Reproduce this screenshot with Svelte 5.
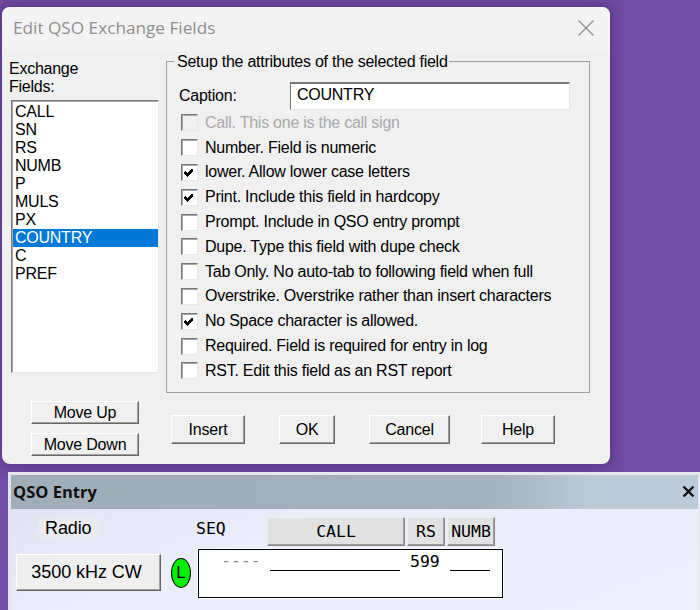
<script>
  const fields = ['CALL','SN','RS','NUMB','P','MULS','PX','COUNTRY','C','PREF'];
  const opts = [
    ['Call. This one is the call sign', false, true],
    ['Number. Field is numeric', false],
    ['lower. Allow lower case letters', true],
    ['Print. Include this field in hardcopy', true],
    ['Prompt. Include in QSO entry prompt', false],
    ['Dupe. Type this field with dupe check', false],
    ['Tab Only. No auto-tab to following field when full', false],
    ['Overstrike. Overstrike rather than insert characters', false],
    ['No Space character is allowed.', true],
    ['Required. Field is required for entry in log', false],
    ['RST. Edit this field as an RST report', false]
  ];
</script>

<div class="desktop">
  <section class="dialog">
    <header class="dtitle">
      <span>Edit QSO Exchange Fields</span>
      <svg class="dclose" width="16" height="16" viewBox="0 0 16 16"><path d="M.5.5l15 15M15.5.5l-15 15" stroke="#8c8c8c" stroke-width="1.2" fill="none"/></svg>
    </header>
    <div class="dbody">
      <div class="main">
        <div class="left">
          <div class="exlabel">Exchange<br/>Fields:</div>
          <ul class="list">
            {#each fields as f}
              <li class:sel={f === 'COUNTRY'}>{f}</li>
            {/each}
          </ul>
        </div>
        <div class="group">
          <div class="legend">Setup the attributes of the selected field</div>
          <div class="caprow">
            <span class="caplabel">Caption:</span>
            <div class="input">COUNTRY</div>
          </div>
          <div class="opts">
            {#each opts as [label, checked, disabled]}
              <div class="opt" class:disabled>
                <span class="box">
                  {#if checked}
                    <svg width="13" height="13" viewBox="0 0 13 13" shape-rendering="crispEdges"><path d="M2 5h1v1h1v1h1v-1h1v-1h1v-1h1v-1h2v3h-1v1h-1v1h-1v1h-1v1h-1v1h-1v-1h-1v-1h-1v-1h-1z" fill="#000"/></svg>
                  {/if}
                </span>
                <span>{label}</span>
              </div>
            {/each}
          </div>
        </div>
      </div>
      <div class="buttons">
        <div class="moves">
          <button class="win mv">Move Up</button>
          <button class="win mv">Move Down</button>
        </div>
        <div class="actions">
          <button class="win ins">Insert</button>
          <button class="win ok">OK</button>
          <button class="win can">Cancel</button>
          <button class="win hlp">Help</button>
        </div>
      </div>
    </div>
  </section>

  <section class="qso">
    <header class="qtitle">
      <span>QSO Entry</span>
      <svg width="13" height="13" viewBox="0 0 13 13"><path d="M1.5 1.5l10 10M11.5 1.5l-10 10" stroke="#111" stroke-width="2.4" fill="none"/></svg>
    </header>
    <div class="qbody">
      <div class="radio">
        <div class="radiolabel">Radio</div>
        <button class="win freq">3500 kHz CW</button>
      </div>
      <div class="led">L</div>
      <div class="entry">
        <div class="heads">
          <span class="seq">SEQ</span>
          <button class="win mono call">CALL</button>
          <button class="win mono rs">RS</button>
          <button class="win mono numb">NUMB</button>
        </div>
        <div class="fields">
          <span class="dash">----</span>
          <span class="line l1"></span>
          <span class="val">599</span>
          <span class="line l2"></span>
        </div>
      </div>
    </div>
  </section>
</div>

<style>
  :global(body) { margin: 0; }
  .desktop {
    position: relative;
    width: 700px;
    height: 610px;
    overflow: hidden;
    background: #744ea5;
    font-family: "Liberation Sans", Arial, sans-serif;
    font-size: 16px;
    letter-spacing: -0.25px;
    color: #000;
  }
  .dialog {
    position: absolute;
    left: 2px;
    top: 7px;
    width: 608px;
    height: 457px;
    border-radius: 8px;
    overflow: hidden;
    background: #f0f0f0;
    box-shadow: 0 0 12px 5px rgba(70, 40, 120, 0.55);
  }
  .dtitle {
    height: 43px;
    box-sizing: border-box;
    background: #f3f3f3;
    display: flex;
    align-items: center;
    justify-content: space-between;
    padding: 0 16px 2px 11px;
    font-family: "Open Sans", sans-serif;
    font-size: 17.2px;
    letter-spacing: 0;
    color: #8f8f8f;
  }
  .dbody { padding: 0 0 0 7px; }
  .main { display: flex; height: 343px; padding-top: 11px; box-sizing: border-box; }
  .left { width: 157px; flex: none; }
  .exlabel { line-height: 18px; height: 39px; margin-top: -1px; margin-bottom: 1px; }
  .list {
    list-style: none;
    margin: 0 0 0 2px;
    padding: 2px 0 2px 1px;
    box-sizing: border-box;
    width: 148px;
    height: 273px;
    background: #fff;
    border: 1px solid;
    border-color: #7a7a7a #e8e8e8 #e8e8e8 #7a7a7a;
    box-shadow: inset 1px 1px 0 #a8a8a8;
  }
  .list li { height: 18px; line-height: 18px; padding-left: 2px; }
  .list li.sel { background: #0078d7; color: #fff; }
  .group {
    position: relative;
    width: 424px;
    height: 332px;
    box-sizing: border-box;
    border: 1px solid #a0a0a0;
    padding: 20px 19px 0 12px;
  }
  .legend {
    position: absolute;
    left: 7px;
    top: -9px;
    padding: 0 1px 0 3px;
    background: #f0f0f0;
    line-height: 18px;
  }
  .caprow { display: flex; align-items: center; height: 28px; }
  .caplabel { width: 111px; flex: none; }
  .input {
    width: 280px;
    height: 28px;
    box-sizing: border-box;
    background: #fff;
    padding-left: 6px;
    line-height: 21px;
    border: 1px solid;
    border-color: #777 #e6e6e6 #e6e6e6 #777;
    border-top-width: 2px;
  }
  .opts {
    display: grid;
    grid-auto-rows: 24.8px;
    margin-top: 0.5px;
    padding-left: 2px;
  }
  .opt { display: flex; align-items: center; gap: 7px; white-space: nowrap; }
  .box {
    width: 17px;
    height: 17px;
    box-sizing: border-box;
    flex: none;
    background: #fff;
    border: 1px solid;
    border-color: #777 #e8e8e8 #e8e8e8 #777;
    box-shadow: inset 1px 1px 0 #a8a8a8;
    display: flex;
    align-items: center;
    justify-content: center;
  }
  .opt.disabled { color: #aaaaaa; }
  .opt.disabled .box { background: #f0f0f0; }
  .buttons { display: flex; align-items: flex-start; padding-top: 8px; }
  .moves { display: flex; flex-direction: column; gap: 9px; margin-left: 22px; }
  .actions { display: flex; margin: 14px 0 0 32px; }
  .win {
    font-family: "Liberation Sans", Arial, sans-serif;
    font-size: 16px;
    letter-spacing: -0.2px;
    color: #000;
    background: #f0f0f0;
    padding: 0;
    box-sizing: border-box;
    border: 1px solid;
    border-color: #fff #666 #666 #fff;
    box-shadow: inset -1px -1px 0 #a0a0a0;
    border-radius: 0;
  }
  .mv { width: 108px; height: 23px; }
  .ins { width: 74px; height: 29px; }
  .ok { width: 56px; height: 29px; margin-left: 34px; }
  .can { width: 81px; height: 29px; margin-left: 34px; }
  .hlp { width: 74px; height: 29px; margin-left: 31px; }

  .qso {
    position: absolute;
    left: 8px;
    top: 472px;
    width: 692px;
    height: 138px;
    box-sizing: border-box;
    border-top: 3px solid #e9e7ee;
    border-left: 3px solid #e4e4ee;
    border-right: 2px solid #e8e8f0;
    background: linear-gradient(160deg, #dfe1f2 0%, #ebedfa 40%, #edf0fc 100%);
    letter-spacing: 0;
  }
  .qtitle {
    height: 34px;
    box-sizing: border-box;
    display: flex;
    align-items: center;
    justify-content: space-between;
    padding: 0 3px 1px 2px;
    background: linear-gradient(90deg, #a0aeb9 0%, #a4b0bb 70%, #bdcbd8 85%, #bdcbd8 100%);
    font-family: "Open Sans", sans-serif;
    font-weight: 700;
    font-size: 16.5px;
    color: #111;
  }
  .qbody { display: flex; align-items: flex-start; padding: 8px 0 0 5px; }
  .radio { width: 145px; flex: none; }
  .radiolabel {
    margin-left: 23px;
    width: 60px;
    height: 21px;
    box-sizing: border-box;
    padding-left: 6px;
    font-size: 18px;
    letter-spacing: -0.1px;
    line-height: 23px;
    background: #eaeaf0;
  }
  .freq {
    display: block;
    margin-top: 16px;
    width: 145px;
    height: 37px;
    font-size: 18px;
    letter-spacing: -0.05px;
    padding: 0 4px 0 0;
    background: #efefef;
  }
  .led {
    margin: 41px 0 0 10px;
    width: 20px;
    height: 30px;
    box-sizing: border-box;
    border-radius: 50%;
    background: #00f000;
    border: 1px solid #000;
    text-align: center;
    font-size: 17px;
    line-height: 27px;
    flex: none;
  }
  .entry { margin-left: 7px; width: 305px; }
  .mono { font-family: "DejaVu Sans Mono", monospace; font-size: 16.5px; letter-spacing: 0; padding: 0; background: #e2e2e2; border-color: #ececec #888 #888 #ececec; }
  .heads { display: flex; height: 29px; margin-top: 0; align-items: flex-start; gap: 2px; }
  .seq { font-family: "DejaVu Sans Mono", monospace; font-size: 16.5px; width: 69px; margin-left: -2px; flex: none; line-height: 24px; }
  .call { width: 138px; height: 29px; }
  .rs { width: 38px; height: 29px; }
  .numb { width: 48px; height: 29px; }
  .fields {
    position: relative;
    margin-top: 3px;
    height: 49px;
    box-sizing: border-box;
    background: #fff;
    border: 1px solid #000;
    outline: 1px solid #fff;
    font-family: "DejaVu Sans Mono", monospace;
    font-size: 16.5px;
  }
  .fields > span { position: absolute; }
  .dash { left: 22px; top: 2px; color: #888; line-height: 18px; }
  .val { left: 211px; top: 3px; line-height: 18px; }
  .line { height: 1px; background: #000; top: 20px; }
  .l1 { left: 71px; width: 130px; }
  .l2 { left: 251px; width: 40px; }
</style>
